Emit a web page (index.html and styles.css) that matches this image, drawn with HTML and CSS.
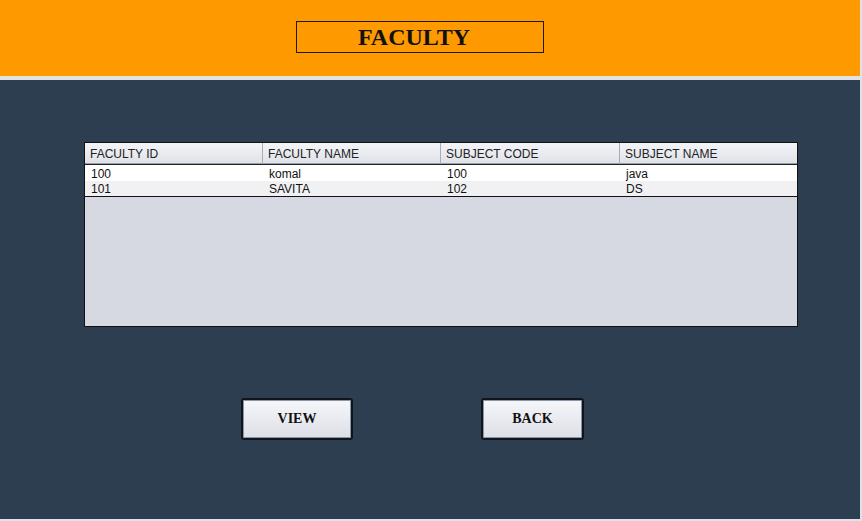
FILE: index.html
```html
<!DOCTYPE html>
<html>
<head>
<meta charset="utf-8">
<link rel="stylesheet" href="styles.css">
</head>
<body>
<div class="frame">
  <header class="top">
    <div class="title">FACULTY</div>
  </header>
  <div class="stripe"></div>
  <main class="main">
    <div class="table">
      <div class="thead">
        <div class="th">FACULTY ID</div>
        <div class="th">FACULTY NAME</div>
        <div class="th">SUBJECT CODE</div>
        <div class="th last">SUBJECT NAME</div>
      </div>
      <div class="tbody">
        <div class="tr odd">
          <div class="td">100</div><div class="td">komal</div><div class="td">100</div><div class="td">java</div>
        </div>
        <div class="tr even">
          <div class="td">101</div><div class="td">SAVITA</div><div class="td">102</div><div class="td">DS</div>
        </div>
      </div>
      <div class="empty"></div>
    </div>
    <div class="buttons">
      <button class="btn view">VIEW</button>
      <button class="btn back">BACK</button>
    </div>
  </main>
</div>
</body>
</html>
```
FILE: styles.css
```css
* { box-sizing: border-box; }
html, body { margin: 0; padding: 0; }
body {
  width: 862px;
  height: 521px;
  overflow: hidden;
  background: #dfe2e8;
  font-family: "Liberation Sans", Arial, sans-serif;
}
.frame {
  width: 860px;
  height: 519px;
  display: flex;
  flex-direction: column;
  background: #2e3e51;
}
.top {
  height: 76px;
  background: #ff9900;
  padding-top: 21px;
  padding-left: 296px;
}
.title {
  width: 248px;
  height: 32px;
  border: 1px solid #1a1a1a;
  padding-right: 12px;
  font-family: "Liberation Serif", "Times New Roman", serif;
  font-weight: bold;
  font-size: 24px;
  line-height: 30px;
  text-align: center;
  color: #111;
}
.stripe {
  height: 4px;
  background: #e2e2e2;
}
.main {
  flex: 1;
  padding-top: 62px;
  padding-left: 84px;
}
.table {
  width: 714px;
  height: 185px;
  border: 1px solid #111;
  background: #d6d9e2;
  display: flex;
  flex-direction: column;
}
.thead {
  display: grid;
  grid-template-columns: 178px 178px 179px 177px;
  height: 21px;
  background: linear-gradient(#f4f5f8, #dfe2e8);
  border-bottom: 1px solid #9a9ea6;
}
.th {
  font-size: 12px;
  line-height: 21px;
  padding-top: 1px;
  padding-left: 5px;
  color: #222;
  border-right: 1px solid #a9adb5;
}
.th.last { border-right: none; }
.tbody {
  border-top: 1px solid #222;
  border-bottom: 1px solid #111;
}
.tr {
  display: grid;
  grid-template-columns: 178px 178px 179px 177px;
  height: 15px;
}
.tr.odd { background: #ffffff; height: 16px; }
.tr.even { background: #f1f1f3; }
.td {
  font-size: 12px;
  line-height: 16px;
  padding-left: 6px;
  color: #111;
}
.tr.odd .td { line-height: 18px; }
.empty { flex: 1; }
.buttons {
  display: flex;
  padding-top: 71px;
  padding-left: 157px;
  gap: 128px;
}
.btn {
  height: 42px;
  border: 2px solid #10151c;
  border-radius: 3px;
  background: linear-gradient(#f6f7fa, #dcdfe6);
  box-shadow: inset 0 0 0 1px #8b96a5;
  font-family: "Liberation Serif", "Times New Roman", serif;
  font-weight: bold;
  font-size: 14px;
  color: #111;
  padding: 0;
}
.view { width: 112px; }
.back { width: 103px; }
```
